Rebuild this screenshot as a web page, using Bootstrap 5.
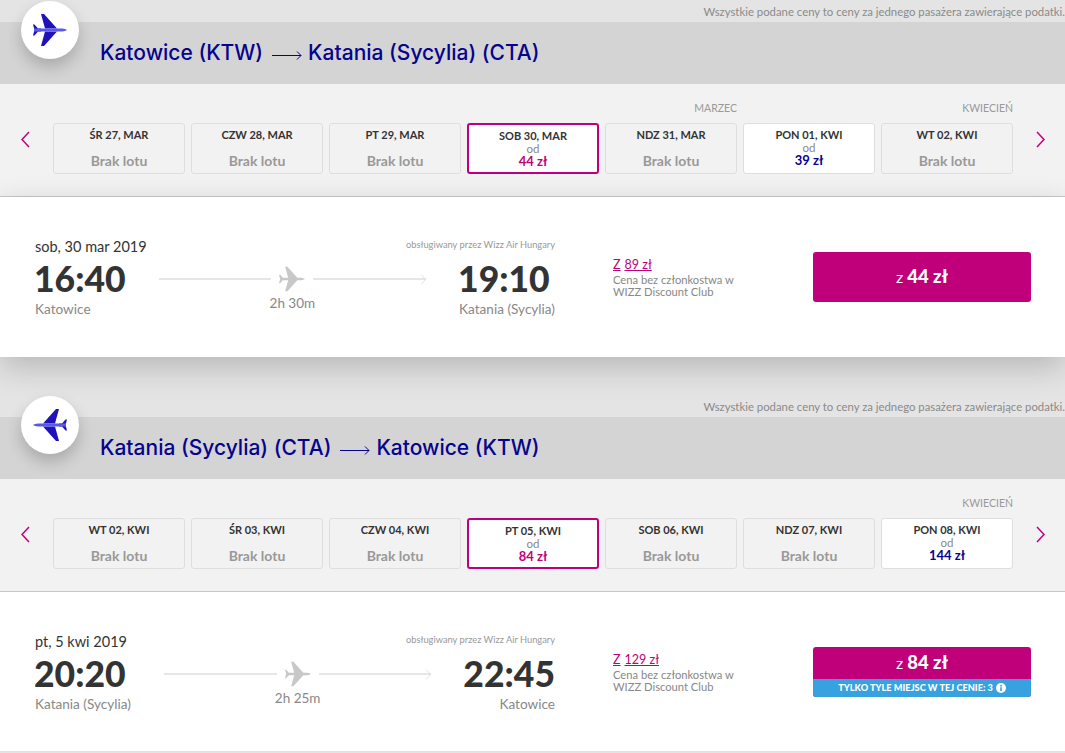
<!DOCTYPE html>
<html lang="pl">
  <head>
    <meta charset="UTF-8" />
    <meta name="viewport" content="width=device-width, initial-scale=1.0" />
    <title>Wybór lotu</title>
    <link href="https://cdn.jsdelivr.net/npm/bootstrap@5.3.0/dist/css/bootstrap.min.css" rel="stylesheet" />
    <style>
      body { background-color: #e4e4e4; font-family: "Lato", "Liberation Sans", sans-serif; color: #333; overflow: hidden; }
      .leg { position: relative; height: 395px; }
      .leg-last { height: 358px; }
      .fare-note { height: 22px; font-size: 11.35px; line-height: 24px; color: #8a8a8a; text-align: right; white-space: nowrap; }
      .route-head { height: 62px; background-color: #d4d4d4; padding-left: 100px; padding-top: 16px; font-family: "Inter", "Lato", sans-serif; font-size: 21px; font-weight: 500; line-height: 30px; color: #06038d; }
      .route-arrow { width: 30px; height: 9px; margin: 13px 6px 0 9px; flex-shrink: 0; }
      .plane-badge { position: absolute; left: 21px; top: 1px; width: 58px; height: 58px; border-radius: 50%; background-color: #fff; box-shadow: 0 8px 16px rgba(0, 0, 0, .2); }
      .plane-icon { width: 34px; height: 32px; }
      .cal-band { height: 113px; background-color: #f2f2f2; border-bottom: 1px solid #c8c8c8; padding-top: 17px; }
      .month-row { height: 22px; padding: 0 52px 0 53px; font-size: 10.5px; line-height: 15px; color: #999; }
      .month-cell { width: 132px; text-align: right; }
      .month-mar { margin-left: 552px; }
      .month-kwi { margin-left: 144px; }
      .day-row { gap: 6px; }
      .cal-arrow { width: 53px; line-height: 0; padding-top: 8px; flex-shrink: 0; }
      .cal-prev { padding-left: 21px; }
      .cal-next { width: 52px; padding-left: 23px; }
      .cal-arrow svg { width: 9px; height: 17px; }
      .day-card { width: 132px; height: 51px; border: 1px solid #dedede; border-radius: 3px; background-color: #f2f2f2; text-align: center; padding-top: 3px; }
      .day-name { font-size: 11px; font-weight: 700; line-height: 15px; color: #333; }
      .day-none { font-size: 14px; font-weight: 700; line-height: 18px; color: #999; margin-top: 10px; }
      .day-from { font-size: 11.5px; line-height: 11px; color: #888; }
      .day-price { font-size: 13px; font-weight: 700; line-height: 15px; color: #06038d; }
      .day-open { background-color: #fff; }
      .day-picked { background-color: #fff; border: 2px solid #c0007a; }
      .day-picked .day-price { color: #c0007a; }
      .result-panel { height: 160px; background-color: #fff; padding: 41px 34px 0 35px; }
      .result-shadow { box-shadow: 0 10px 30px rgba(0, 0, 0, .2); position: relative; }
      .flight-box { width: 520px; }
      .flight-top { height: 21px; }
      .flight-date { font-size: 14.5px; line-height: 18px; color: #333; }
      .flight-op { font-size: 9.3px; line-height: 14px; color: #999; }
      .flight-time { font-size: 35.5px; font-weight: 900; line-height: 40px; margin-left: -1px; color: #333; }
      .flight-city { font-size: 13.6px; line-height: 20px; color: #888; white-space: nowrap; }
      .flight-row { gap: 33px; }
      .flight-track { padding-top: 7px; }
      .track-line { height: 2px; background-color: #e6e6e6; }
      .track-plane { width: 26px; height: 26px; }
      .track-head { width: 5px; height: 11px; margin-left: -5px; }
      .track-time { font-size: 13.5px; line-height: 18px; margin-top: 2px; color: #888; text-align: center; }
      .club-box { width: 200px; margin-left: 58px; padding-top: 20px; font-size: 11.2px; line-height: 12px; color: #888; }
      .club-price { font-size: 12.5px; line-height: 14px; margin-bottom: 2px; }
      .club-price a { color: #c0007a; margin-right: 4px; }
      .buy-btn { width: 218px; height: 50px; margin-top: 14px; border-radius: 3px; background-color: #c0007a; color: #fff; overflow: hidden; }
      .buy-main { height: 50px; font-size: 16px; }
      .buy-main b { font-size: 18.5px; font-weight: 900; margin-left: 4px; }
      .buy-short { height: 32px; }
      .seat-strip { height: 18px; background-color: #38a1e0; font-size: 9.2px; font-weight: 900; gap: 3px; }
      .seat-info { width: 10px; height: 10px; }
    </style>
  </head>
  <body>
    <!-- Wylot -->
    <section class="leg">
      <div class="fare-note">Wszystkie podane ceny to ceny za jednego pasażera zawierające podatki.</div>
      <div class="route-head d-flex">
        <span>Katowice (KTW)</span>
        <svg class="route-arrow" viewBox="0 0 30 9"><path d="M0 4.500h29M25 .5l4 4-4 4" fill="none" stroke="#06038d" /></svg>
        <span>Katania (Sycylia) (CTA)</span>
      </div>
      <div class="plane-badge d-flex align-items-center justify-content-center">
        <svg class="plane-icon" viewBox="0 0 34 32">
          <path d="M8 0h3l13 14.500H12zM12 17.500h12L11 32H8z" fill="#1f12b8" />
          <path d="M0 10.500h1.500L5 14.500h3v3H5l-3.500 4H0l1.500-5.500z" fill="#1f12b8" />
          <path d="M1 14.500h28c2 0 4 1 5 1.500-1 .5-3 1.500-5 1.500H1z" fill="#5a58e6" />
        </svg>
      </div>
      <div class="cal-band">
        <div class="month-row d-flex">
          <div class="month-cell month-mar">MARZEC</div>
          <div class="month-cell month-kwi">KWIECIEŃ</div>
        </div>
        <div class="d-flex align-items-start">
          <div class="cal-arrow cal-prev"><svg viewBox="0 0 9 17"><path d="M8 1L1 8.500l7 7.500" fill="none" stroke="#c0007a" stroke-width="1.500" /></svg></div>
          <div class="d-flex day-row">
            <div class="day-card"><div class="day-name">ŚR 27, MAR</div><div class="day-none">Brak lotu</div></div>
            <div class="day-card"><div class="day-name">CZW 28, MAR</div><div class="day-none">Brak lotu</div></div>
            <div class="day-card"><div class="day-name">PT 29, MAR</div><div class="day-none">Brak lotu</div></div>
            <div class="day-card day-picked"><div class="day-name">SOB 30, MAR</div><div class="day-from">od</div><div class="day-price">44 zł</div></div>
            <div class="day-card"><div class="day-name">NDZ 31, MAR</div><div class="day-none">Brak lotu</div></div>
            <div class="day-card day-open"><div class="day-name">PON 01, KWI</div><div class="day-from">od</div><div class="day-price">39 zł</div></div>
            <div class="day-card"><div class="day-name">WT 02, KWI</div><div class="day-none">Brak lotu</div></div>
          </div>
          <div class="cal-arrow cal-next"><svg viewBox="0 0 9 17"><path d="M1 1l7 7.500L1 16" fill="none" stroke="#c0007a" stroke-width="1.500" /></svg></div>
        </div>
      </div>
      <div class="result-panel result-shadow d-flex">
        <div class="flight-box">
          <div class="flight-top d-flex justify-content-between align-items-start">
            <span class="flight-date">sob, 30 mar 2019</span>
            <span class="flight-op">obsługiwany przez Wizz Air Hungary</span>
          </div>
          <div class="flight-row d-flex">
            <div><div class="flight-time">16:40</div><div class="flight-city">Katowice</div></div>
            <div class="flight-track flex-grow-1">
              <div class="d-flex align-items-center">
                <div class="track-line flex-grow-1"></div>
                <svg class="track-plane mx-2" viewBox="0 0 34 32">
                  <path d="M8 0h3l13 14.500H12zM12 17.500h12L11 32H8zM0 10.500h1.500L5 14.500h24c2 0 4 1 5 1.500-1 .5-3 1.500-5 1.500H5l-3.500 4H0l1.500-5.500z" fill="#c8c8c8" />
                </svg>
                <div class="track-line flex-grow-1"></div>
                <svg class="track-head" viewBox="0 0 5 11"><path d="M0 .5l4.500 5-4.500 5" fill="none" stroke="#e0e0e0" /></svg>
              </div>
              <div class="track-time">2h 30m</div>
            </div>
            <div><div class="flight-time">19:10</div><div class="flight-city">Katania (Sycylia)</div></div>
          </div>
        </div>
        <div class="club-box">
          <div class="club-price"><a href="#">Z</a><a href="#">89 zł</a></div>
          Cena bez członkostwa w<br />WIZZ Discount Club
        </div>
        <div class="buy-btn">
          <div class="buy-main d-flex align-items-center justify-content-center">z <b>44 zł</b></div>
        </div>
      </div>
    </section>

    <!-- Powrót -->
    <section class="leg leg-last">
      <div class="fare-note">Wszystkie podane ceny to ceny za jednego pasażera zawierające podatki.</div>
      <div class="route-head d-flex">
        <span>Katania (Sycylia) (CTA)</span>
        <svg class="route-arrow" viewBox="0 0 30 9"><path d="M0 4.500h29M25 .5l4 4-4 4" fill="none" stroke="#06038d" /></svg>
        <span>Katowice (KTW)</span>
      </div>
      <div class="plane-badge d-flex align-items-center justify-content-center">
        <svg class="plane-icon" viewBox="0 0 34 32">
          <g transform="matrix(-1 0 0 1 34 0)">
            <path d="M8 0h3l13 14.500H12zM12 17.500h12L11 32H8z" fill="#1f12b8" />
            <path d="M0 10.500h1.500L5 14.500h3v3H5l-3.500 4H0l1.500-5.500z" fill="#1f12b8" />
            <path d="M1 14.500h28c2 0 4 1 5 1.500-1 .5-3 1.500-5 1.500H1z" fill="#5a58e6" />
          </g>
        </svg>
      </div>
      <div class="cal-band">
        <div class="month-row d-flex justify-content-end">
          <div class="month-cell">KWIECIEŃ</div>
        </div>
        <div class="d-flex align-items-start">
          <div class="cal-arrow cal-prev"><svg viewBox="0 0 9 17"><path d="M8 1L1 8.500l7 7.500" fill="none" stroke="#c0007a" stroke-width="1.500" /></svg></div>
          <div class="d-flex day-row">
            <div class="day-card"><div class="day-name">WT 02, KWI</div><div class="day-none">Brak lotu</div></div>
            <div class="day-card"><div class="day-name">ŚR 03, KWI</div><div class="day-none">Brak lotu</div></div>
            <div class="day-card"><div class="day-name">CZW 04, KWI</div><div class="day-none">Brak lotu</div></div>
            <div class="day-card day-picked"><div class="day-name">PT 05, KWI</div><div class="day-from">od</div><div class="day-price">84 zł</div></div>
            <div class="day-card"><div class="day-name">SOB 06, KWI</div><div class="day-none">Brak lotu</div></div>
            <div class="day-card"><div class="day-name">NDZ 07, KWI</div><div class="day-none">Brak lotu</div></div>
            <div class="day-card day-open"><div class="day-name">PON 08, KWI</div><div class="day-from">od</div><div class="day-price">144 zł</div></div>
          </div>
          <div class="cal-arrow cal-next"><svg viewBox="0 0 9 17"><path d="M1 1l7 7.500L1 16" fill="none" stroke="#c0007a" stroke-width="1.500" /></svg></div>
        </div>
      </div>
      <div class="result-panel border-bottom d-flex">
        <div class="flight-box">
          <div class="flight-top d-flex justify-content-between align-items-start">
            <span class="flight-date">pt, 5 kwi 2019</span>
            <span class="flight-op">obsługiwany przez Wizz Air Hungary</span>
          </div>
          <div class="flight-row d-flex">
            <div><div class="flight-time">20:20</div><div class="flight-city">Katania (Sycylia)</div></div>
            <div class="flight-track flex-grow-1">
              <div class="d-flex align-items-center">
                <div class="track-line flex-grow-1"></div>
                <svg class="track-plane mx-2" viewBox="0 0 34 32">
                  <path d="M8 0h3l13 14.500H12zM12 17.500h12L11 32H8zM0 10.500h1.500L5 14.500h24c2 0 4 1 5 1.500-1 .5-3 1.500-5 1.500H5l-3.500 4H0l1.500-5.500z" fill="#c8c8c8" />
                </svg>
                <div class="track-line flex-grow-1"></div>
                <svg class="track-head" viewBox="0 0 5 11"><path d="M0 .5l4.500 5-4.500 5" fill="none" stroke="#e0e0e0" /></svg>
              </div>
              <div class="track-time">2h 25m</div>
            </div>
            <div class="text-end"><div class="flight-time">22:45</div><div class="flight-city">Katowice</div></div>
          </div>
        </div>
        <div class="club-box">
          <div class="club-price"><a href="#">Z</a><a href="#">129 zł</a></div>
          Cena bez członkostwa w<br />WIZZ Discount Club
        </div>
        <div class="buy-btn">
          <div class="buy-main buy-short d-flex align-items-center justify-content-center">z <b>84 zł</b></div>
          <div class="seat-strip d-flex align-items-center justify-content-center">
            TYLKO TYLE MIEJSC W TEJ CENIE: 3
            <svg class="seat-info" viewBox="0 0 10 10"><circle cx="5" cy="5" r="5" fill="#fff" /><path d="M4.200 2h1.600v1.400H4.200zM4.200 4.300h1.600V8H4.200z" fill="#38a1e0" /></svg>
          </div>
        </div>
      </div>
    </section>

    <script src="https://cdn.jsdelivr.net/npm/bootstrap@5.3.0/dist/js/bootstrap.bundle.min.js"></script>
  </body>
</html>
